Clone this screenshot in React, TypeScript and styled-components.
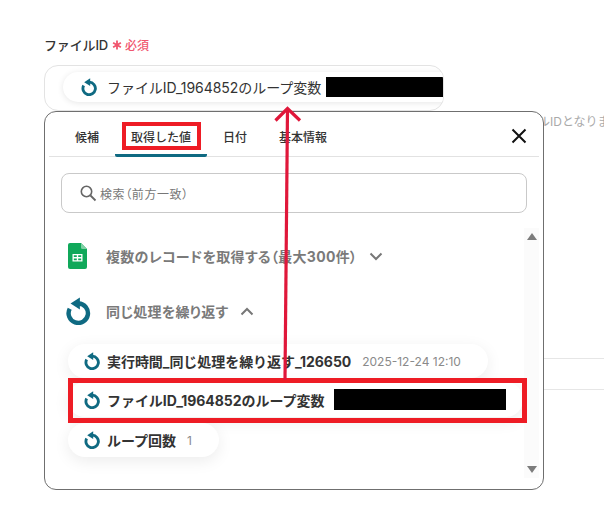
import React from "react";
import styled, { createGlobalStyle } from "styled-components";

const Global = createGlobalStyle`
  html, body { margin: 0; padding: 0; background: #fff; }
  body { font-family: Inter, "Noto Sans CJK JP", sans-serif; color: #333; }
`;
const Page = styled.div`
  position: relative; width: 604px; height: 516px; overflow: hidden; background: #fff;
  padding: 36px 0 0 44px; box-sizing: border-box;
`;
const LabelRow = styled.div`
  display: flex; align-items: center; height: 18px; font-size: 13px; font-weight: 500; color: #333; position: relative; top: -1px; letter-spacing: -.15px;
`;
const StarIcon = styled.svg`margin: 1px 3px 0 4px; flex: none;`;
const Req = styled.span`color: #f0566e; font-size: 12px; font-weight: 500;`;
const Field = styled.div`
  box-sizing: border-box; width: 400px; height: 46px; margin-top: 11px; border: 1px solid #e3e3e3; border-radius: 14px;
  padding: 6px 0 6px 18px; overflow: hidden; background: #fff;
`;
const FieldChip = styled.div`
  display: flex; align-items: center; height: 30px; padding-left: 17px; width: 420px; border-radius: 16px;
  background: #fff; box-shadow: 0 1px 6px rgba(0,0,0,.1); font-size: 14px; color: #333; white-space: nowrap; gap: 9px;
  letter-spacing: -.05px;
`;
const Mask = styled.span<{ $w: number; $h: number }>`
  display: block; flex: none; width: ${p => p.$w}px; height: ${p => p.$h}px; background: #000;
`;
const FieldMask = styled(Mask)`margin-left: -4px;`;
const ChipMask = styled(Mask)`margin-left: 4px;`;
const Hint = styled.div`
  position: absolute; left: 538px; top: 112px; font-size: 12px; color: #aaa; white-space: nowrap;
`;
const SideLine = styled.div<{ $top: number }>`
  position: absolute; left: 544px; right: 0; top: ${p => p.$top}px; height: 1px; background: #e6e6e6;
`;
const Panel = styled.div`
  position: absolute; left: 44px; top: 111px; box-sizing: border-box; width: 500px; height: 379px;
  background: #fff; border: 1px solid #6f6f6f; border-radius: 12px; padding: 0 4px; z-index: 1;
`;
const TabBar = styled.div`
  display: flex; align-items: stretch; height: 44px; padding-left: 10px; border-bottom: 1px solid #e2e2e2;
  position: relative;
`;
const Tab = styled.div<{ $active?: boolean }>`
  box-sizing: border-box; padding: 6px 16px 0; display: flex; align-items: center; font-size: 12px; font-weight: 500; color: #333;
  border-bottom: ${p => (p.$active ? "3px solid #0f6a82" : "3px solid transparent")}; border-radius: 0 0 2px 2px;
  margin-bottom: -1px; white-space: nowrap;
`;
const Close = styled.button`
  position: absolute; right: 12px; top: 16px; width: 16px; height: 16px; border: 0; padding: 0; background: none; display: flex;
`;
const SearchBox = styled.div`
  box-sizing: border-box; display: flex; align-items: center; gap: 3px; margin: 16px 12px 0 12px; height: 40px; width: 466px;
  border: 1px solid #c9c9c9; border-radius: 8px; padding-left: 17px; font-size: 12px; color: #777; font-feature-settings: "palt"; letter-spacing: .6px;
`;
const Content = styled.div`
  display: flex; margin-top: 15px; height: 250px;
`;
const List = styled.div`flex: 1; min-width: 0; display: flex; flex-direction: column;`;
const Track = styled.div`
  width: 15px; background: #fbfbfb; display: flex; flex-direction: column; justify-content: space-between; align-items: center; padding: 5px 0; box-sizing: border-box;
`;
const Arrow = styled.div<{ $down?: boolean }>`
  width: 0; height: 0; border-left: 5px solid transparent; border-right: 5px solid transparent;
  ${p => (p.$down ? "border-top: 7px solid #7c7c7c;" : "border-bottom: 7px solid #7c7c7c;")}
`;
const Group = styled.div<{ $top: number }>`
  display: flex; align-items: center; height: 28px; margin-top: ${p => p.$top}px; font-size: 14px; font-weight: 700; color: #7a7a7a; white-space: nowrap;
  font-feature-settings: "palt"; letter-spacing: .3px;
`;
const IconSlot = styled.div`width: 57px; display: flex; justify-content: center; flex: none;`;
const Chevron = styled.svg`margin-left: 12px;`;
const Chips = styled.div`display: flex; flex-direction: column; gap: 4px; margin: 19px 0 0 19px;`;
const Chip = styled.div`
  box-sizing: border-box; display: flex; align-items: center; align-self: flex-start; height: 34px; padding: 0 27px 0 15px; gap: 6px;
  border-radius: 17px; background: #fff; box-shadow: 0 4px 16px rgba(0,0,0,.08); font-size: 14px; font-weight: 700; color: #333; white-space: nowrap;
  letter-spacing: -.05px;
`;
const ChipWide = styled(Chip)`height: 35px; margin-bottom: 2px; padding-right: 0; width: 455px;`;
const Meta = styled.span`font-size: 12px; font-weight: 400; color: #8a8a8a; margin-left: 5px; letter-spacing: 0;`;
const Highlight = styled.div<{ $l: number; $t: number; $w: number; $h: number; $b: number }>`
  position: absolute; z-index: 2; box-sizing: border-box; left: ${p => p.$l}px; top: ${p => p.$t}px; width: ${p => p.$w}px; height: ${p => p.$h}px;
  border: ${p => p.$b}px solid #ee1c25; pointer-events: none;
`;
const ArrowOverlay = styled.svg`position: absolute; left: 0; top: 0; z-index: 3; pointer-events: none;`;

const Loop = ({ s = 18 }: { s?: number }) => (
  <svg width={s} height={s} viewBox="0 0 24 24" fill="none" style={{ flex: "none" }}>
    <path d="M12.500 5.600a8.300 8.300 0 1 1-7.600 4.400" stroke="#0f6a82" strokeWidth="3.800" />
    <path d="M13.600 0.400v10.400L5.600 5.600z" fill="#0f6a82" />
  </svg>
);

export default function App() {
  return (
    <Page>
      <Global />
      <LabelRow>
        ファイルID
        <StarIcon width="10" height="10" viewBox="0 0 10 10">
          <path d="M5 0.500v9M1.100 2.750l7.800 4.500M8.900 2.750l-7.800 4.500" stroke="#f0566e" strokeWidth="1.800" />
        </StarIcon>
        <Req>必須</Req>
      </LabelRow>
      <Field>
        <FieldChip>
          <Loop />
          ファイルID_1964852のループ変数
          <FieldMask $w={120} $h={20} />
        </FieldChip>
      </Field>
      <Hint>ルIDとなりま</Hint>
      <SideLine $top={358} />
      <SideLine $top={389} />
      <Panel>
        <TabBar>
          <Tab>候補</Tab>
          <Tab $active>取得した値</Tab>
          <Tab>日付</Tab>
          <Tab>基本情報</Tab>
          <Close>
            <svg width="16" height="16" viewBox="0 0 16 16">
              <path d="M1.500 1.500l13 13M14.500 1.500l-13 13" stroke="#111" strokeWidth="2" />
            </svg>
          </Close>
        </TabBar>
        <SearchBox>
          <svg width="18" height="18" viewBox="0 0 18 18" fill="none">
            <circle cx="7.500" cy="7.500" r="5.200" stroke="#666" strokeWidth="1.600" />
            <path d="M11.500 11.500l5 5" stroke="#666" strokeWidth="1.800" />
          </svg>
          検索（前方一致）
        </SearchBox>
        <Content>
          <List>
            <Group $top={14}>
              <IconSlot>
                <svg width="19" height="26" viewBox="0 0 19 26">
                  <path d="M2 0h11l6 6v18a2 2 0 0 1-2 2H2a2 2 0 0 1-2-2V2a2 2 0 0 1 2-2z" fill="#10a85a" />
                  <path d="M13 0l6 6h-4.500A1.500 1.500 0 0 1 13 4.500z" fill="#7fd0a4" />
                  <path d="M4.500 11h10v7.500h-10z" fill="#fff" />
                  <path d="M5.800 12.300h3v1.800h-3zM10.200 12.300h3v1.800h-3zM5.800 15.400h3v1.800h-3zM10.200 15.400h3v1.800h-3z" fill="#10a85a" />
                </svg>
              </IconSlot>
              複数のレコードを取得する（最大300件）
              <Chevron width="14" height="9" viewBox="0 0 14 9" fill="none">
                <path d="M1.500 1.500L7 7l5.500-5.500" stroke="#777" strokeWidth="2" />
              </Chevron>
            </Group>
            <Group $top={27}>
              <IconSlot>
                <Loop s={28} />
              </IconSlot>
              同じ処理を繰り返す
              <Chevron width="14" height="9" viewBox="0 0 14 9" fill="none">
                <path d="M1.500 7.500L7 2l5.500 5.500" stroke="#777" strokeWidth="2" />
              </Chevron>
            </Group>
            <Chips>
              <Chip>
                <Loop />
                実行時間_同じ処理を繰り返す_126650
                <Meta>2025-12-24 12:10</Meta>
              </Chip>
              <ChipWide>
                <Loop />
                ファイルID_1964852のループ変数
                <ChipMask $w={172} $h={21} />
              </ChipWide>
              <Chip>
                <Loop />
                ループ回数
                <Meta>1</Meta>
              </Chip>
            </Chips>
          </List>
          <Track>
            <Arrow />
            <Arrow $down />
          </Track>
        </Content>
      </Panel>
      <Highlight $l={122} $t={122} $w={79} $h={28} $b={4} />
      <Highlight $l={68} $t={378} $w={459} $h={45} $b={5} />
      <ArrowOverlay width="604" height="516" viewBox="0 0 604 516" fill="none">
        <path d="M285 380L287.500 109" stroke="#e0173a" strokeWidth="3.200" />
        <path d="M275.500 120.500L287.500 108.500L300 120.500" stroke="#e0173a" strokeWidth="3.200" />
      </ArrowOverlay>
    </Page>
  );
}
